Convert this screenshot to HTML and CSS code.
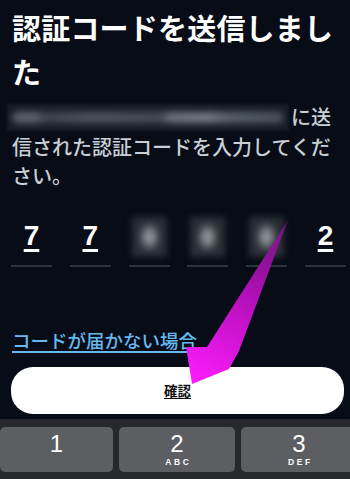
FILE: index.html
```html
<!DOCTYPE html>
<html lang="ja">
<head>
<meta charset="utf-8">
<title>認証コード</title>
<link rel="stylesheet" href="styles.css">
</head>
<body>
<div class="screen">
  <main class="content">
    <h1 class="title">認証コードを送信しました</h1>
    <p class="desc"><span class="email" aria-label="メールアドレス（非表示）"><span class="email-blur"></span></span>に送信された認証コードを入力してください。</p>
    <div class="code-row">
      <div class="cell"><span class="digit">7</span></div>
      <div class="cell"><span class="digit">7</span></div>
      <div class="cell"><span class="blur-digit"></span></div>
      <div class="cell"><span class="blur-digit"></span></div>
      <div class="cell"><span class="blur-digit"></span></div>
      <div class="cell"><span class="digit">2</span></div>
    </div>
    <a class="link" href="#">コードが届かない場合</a>
    <button class="confirm" type="button"><span>確認</span></button>
  </main>
  <div class="keyboard">
    <div class="key"><span class="num">1</span></div>
    <div class="key"><span class="num">2</span><span class="letters">ABC</span></div>
    <div class="key"><span class="num">3</span><span class="letters">DEF</span></div>
  </div>
  <svg class="arrow" width="350" height="479" viewBox="0 0 350 479" aria-hidden="true">
    <defs>
      <linearGradient id="ag" x1="288" y1="220" x2="192" y2="384" gradientUnits="userSpaceOnUse">
        <stop offset="0" stop-color="#7a1585" stop-opacity="0.85"/>
        <stop offset="0.45" stop-color="#b30fb8"/>
        <stop offset="1" stop-color="#ff1cff"/>
      </linearGradient>
    </defs>
    <polygon points="288,220 239,351 229,369 192,384 186,347 207,347" fill="url(#ag)"/>
  </svg>
</div>
</body>
</html>
```

FILE: styles.css
```css
* {
  box-sizing: border-box;
}

html, body {
  margin: 0;
  padding: 0;
  background: #070c16;
}

body {
  width: 350px;
  height: 479px;
  overflow: hidden;
  font-family: "Noto Sans CJK JP", "Liberation Sans", sans-serif;
}

.screen {
  position: relative;
  width: 350px;
  height: 479px;
  display: flex;
  flex-direction: column;
  overflow: hidden;
}

.content {
  padding: 5px 4px 0 11px;
  display: flex;
  flex-direction: column;
}

.title {
  margin: 0;
  padding-left: 1px;
  color: #ffffff;
  font-size: 29px;
  line-height: 44px;
  font-weight: 700;
  letter-spacing: 0.2px;
}

.desc {
  margin: 9px 0 0 0;
  padding-left: 1px;
  color: #c8cfd6;
  font-size: 20px;
  line-height: 29.5px;
  font-weight: 500;
}

.email {
  display: inline-block;
  width: 282px;
  height: 27px;
  margin-left: -5px;
  margin-right: 2px;
  vertical-align: -6px;
  background: #161d27;
  overflow: hidden;
  filter: blur(1.5px);
  padding: 8px 6px;
}

.email-blur {
  display: block;
  height: 11px;
  border-radius: 4px;
  background: linear-gradient(90deg,
    #5c646d 0%, #5c646d 8%,
    #3e454e 12%, #4d555e 30%, #454c55 55%,
    #6a727b 58%, #737b84 72%, #59616a 80%, #4a525b 100%);
  filter: blur(3px);
}

.code-row {
  margin-top: 26px;
  display: grid;
  grid-template-columns: repeat(6, 41px);
  column-gap: 17.8px;
}

.cell {
  height: 50px;
  border-bottom: 2px solid #2d333b;
  display: flex;
  justify-content: center;
  align-items: flex-start;
}

.digit {
  color: #ffffff;
  font-family: "Liberation Sans", sans-serif;
  font-weight: 700;
  font-size: 28px;
  line-height: 38px;
  text-decoration: underline;
  text-decoration-thickness: 3px;
  text-underline-offset: 4px;
}

.blur-digit {
  width: 35px;
  height: 40px;
  background: radial-gradient(ellipse 11px 15px at 50% 50%, #a3a7ad 0%, #7c8087 45%, #2a2f37 100%);
  filter: blur(3px);
}

.link {
  margin-top: 60px;
  align-self: flex-start;
  padding-left: 1px;
  color: #66b8ee;
  font-size: 18.5px;
  line-height: 26px;
  font-weight: 500;
  text-decoration: underline;
  text-decoration-thickness: 1.5px;
  text-underline-offset: 3px;
}

.confirm {
  margin-top: 14px;
  width: 333px;
  height: 47px;
  border: none;
  border-radius: 22px;
  background: #ffffff;
  color: #111111;
  font-family: "Noto Sans CJK JP", sans-serif;
  font-size: 13.5px;
  font-weight: 700;
  padding: 0;
}

.confirm span {
  text-decoration: underline;
  text-underline-offset: 2px;
}

.keyboard {
  margin-top: 5px;
  flex: 1;
  background: #27282c;
  padding-top: 8px;
  display: grid;
  grid-template-columns: 113px 116px 116px;
  column-gap: 6px;
  align-content: start;
}

.key {
  height: 45px;
  background: #5d5e62;
  border-radius: 5px;
  display: flex;
  flex-direction: column;
  align-items: center;
  justify-content: flex-start;
  padding-top: 5.5px;
  color: #ffffff;
  font-family: "Liberation Sans", sans-serif;
}

.num {
  font-size: 24px;
  line-height: 24px;
}

.letters {
  margin-top: 1.5px;
  font-size: 8.5px;
  line-height: 9px;
  font-weight: 700;
  letter-spacing: 2.6px;
  padding-left: 2.6px;
}

.arrow {
  position: absolute;
  left: 0;
  top: 0;
  pointer-events: none;
}
```
